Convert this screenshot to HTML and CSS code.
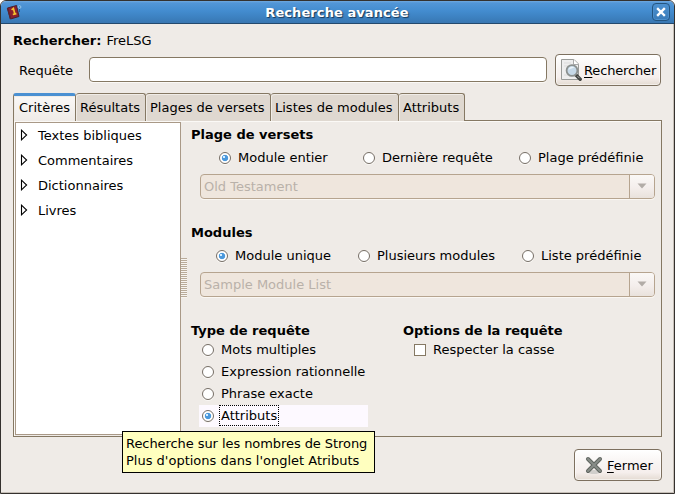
FILE: index.html
```html
<!DOCTYPE html>
<html lang="fr">
<head>
<meta charset="utf-8">
<title>Recherche avancée</title>
<link rel="stylesheet" href="styles.css">
</head>
<body>
<div class="window">
  <header class="titlebar">
    <svg class="app-icon" width="16" height="16" viewBox="0 0 16 16"><path d="M1.5 4 10.5 1.5 13 12.5 4.5 15Z" fill="#8a1f2f" stroke="#4b202c"/><path d="M1.5 4 4.5 15" stroke="#5c2430" stroke-width="1.4"/><path d="M5.6 5.8 7.4 4.4 8.8 9.8M6.8 10.5 10.4 9.6" fill="none" stroke="#f5c22e" stroke-width="1.7"/><circle cx="13.5" cy="3" r="1.4" fill="#4d91cc" stroke="#92c4e9"/><path d="M13.5 5v3" stroke="#245b91"/></svg>
    <h1>Recherche avancée</h1>
    <button class="close" aria-label="Fermer la fenêtre"><svg width="10" height="10" viewBox="0 0 10 10"><path d="M2 2 8 8M8 2 2 8" stroke="#fff" stroke-width="2.4" stroke-linecap="square"/></svg></button>
  </header>
  <main>
    <p class="scope"><b>Rechercher:</b><span>FreLSG</span></p>
    <div class="query">
      <label for="q">Requête</label>
      <input id="q" type="text">
      <button class="button search"><svg width="22" height="24" viewBox="0 0 22 24"><path d="M1.5 1.5H14L18.5 6V21.5H1.5Z" fill="#eee" stroke="#999b98"/><path d="M13.5 1.5V6.5H18.5" fill="#fff" stroke="#aaa"/><path d="M4 5h7M4 8h4M4 17h4" stroke="#dcdcdc"/><path d="m16 17 4.2 4.2" stroke="#424542" stroke-width="3.4" stroke-linecap="round"/><path d="m17.5 18.2 2 2" stroke="#aaa"/><circle cx="12" cy="12.5" r="5.4" fill="#c6d9e8" stroke="#8b908f" stroke-width="1.8"/><path d="M8.5 12c1-3.5 4-4 6-2-2 0-4 .5-6 2Z" fill="#edf5fa"/></svg><span><u>R</u>echercher</span></button>
    </div>
    <nav class="tabs">
      <div class="tab active">Critères</div><div class="tab t2">Résultats</div><div class="tab t3">Plages de versets</div><div class="tab t4">Listes de modules</div><div class="tab t5">Attributs</div>
    </nav>
    <section class="panel">
      <ul class="tree">
        <li><svg width="8" height="12" viewBox="0 0 8 12"><path d="M1.5 1.2V10.8L6.6 6Z"/></svg>Textes bibliques</li>
        <li><svg width="8" height="12" viewBox="0 0 8 12"><path d="M1.5 1.2V10.8L6.6 6Z"/></svg>Commentaires</li>
        <li><svg width="8" height="12" viewBox="0 0 8 12"><path d="M1.5 1.2V10.8L6.6 6Z"/></svg>Dictionnaires</li>
        <li><svg width="8" height="12" viewBox="0 0 8 12"><path d="M1.5 1.2V10.8L6.6 6Z"/></svg>Livres</li>
      </ul>
      <div class="grip"></div>
      <div class="settings">
        <section class="group">
          <h2>Plage de versets</h2>
          <div class="choices verses"><label><i class="radio on"></i>Module entier</label><label><i class="radio"></i>Dernière requête</label><label><i class="radio"></i>Plage prédéfinie</label></div>
          <div class="combo"><span>Old Testament</span><i class="drop"><svg width="10" height="6" viewBox="0 0 10 6"><path d="M.5.5H9.5L5 5.5Z"/></svg></i></div>
        </section>
        <section class="group">
          <h2>Modules</h2>
          <div class="choices modules"><label><i class="radio on"></i>Module unique</label><label><i class="radio"></i>Plusieurs modules</label><label><i class="radio"></i>Liste prédéfinie</label></div>
          <div class="combo"><span>Sample Module List</span><i class="drop"><svg width="10" height="6" viewBox="0 0 10 6"><path d="M.5.5H9.5L5 5.5Z"/></svg></i></div>
        </section>
        <div class="bottom">
          <section class="types">
            <h2>Type de requête</h2>
            <label class="option"><i class="radio"></i>Mots multiples</label>
            <label class="option"><i class="radio"></i>Expression rationnelle</label>
            <label class="option"><i class="radio"></i>Phrase exacte</label>
            <label class="option hover"><i class="radio on"></i><span class="focus">Attributs</span></label>
          </section>
          <section class="options">
            <h2>Options de la requête</h2>
            <label class="option"><i class="check"></i>Respecter la casse</label>
          </section>
        </div>
      </div>
    </section>
    <footer><button class="button fermer"><svg width="18" height="19" viewBox="0 0 18 19"><ellipse cx="9" cy="16" rx="6" ry="2" fill="#d0cecb"/><path d="M3 3 15 15M15 3 3 15" stroke="#5f645f" stroke-width="4" stroke-linecap="round"/><path d="M3 3 15 15M15 3 3 15" stroke="#888d88" stroke-width="2" stroke-linecap="round"/></svg><span><u>F</u>ermer</span></button></footer>
  </main>
  <div class="tooltip"><span class="tight">Recherche sur les nombres de Strong</span><br>Plus d'options dans l'onglet Atributs</div>
</div>
</body>
</html>
```
FILE: styles.css
```css
* { box-sizing: border-box; }
body { margin: 0; background: #fff; color: #000; font: 13px/17px "DejaVu Sans", sans-serif; }
h1, h2, p, ul { margin: 0; padding: 0; }
h1, h2 { font-size: 13px; line-height: 17px; }
button, input { font: inherit; color: inherit; }
i { font-style: normal; flex: none; }
svg { display: block; flex: none; }
label, span, b, .tab, li, h1, h2 { white-space: nowrap; }

.window { position: relative; width: 675px; height: 494px; border: 1px solid #34312e; border-radius: 6px 6px 0 0; background: #efebe7; overflow: hidden; box-shadow: inset -1px -1px #c6bfb7; }
.titlebar { display: flex; align-items: center; height: 23px; padding: 0 4px 0 5px; border-bottom: 1px solid #24496d; background: linear-gradient(#6fa9df 0, #5296d7 2px, #438ccf 10px, #3c80bf 17px, #3977b2); }
.titlebar h1 { flex: 1; text-align: center; color: #fff; text-shadow: 1px 1px 1px #173655; letter-spacing: .08px; }
.close { display: grid; place-items: center; width: 18px; height: 18px; padding: 0; border: 1px solid #245580; border-radius: 4px; background: linear-gradient(#4c91d1, #397bb8); box-shadow: inset 0 0 0 1px #4c8fcd; }

main { padding: 8px 12px 0; }
.scope { display: flex; gap: 5px; height: 17px; }
.query { display: grid; grid-template-columns: 76px 458px 114px; align-items: center; height: 32px; margin-top: 5px; }
.query label { padding-left: 6px; }
.query input { align-self: start; width: 458px; height: 25px; margin-top: 3px; padding: 3px 5px; border: 1px solid #857863; border-radius: 4px; background: #fff; box-shadow: 0 1px #fbf9f6; outline: none; }
.button { display: flex; align-items: center; height: 32px; padding: 0 4px; border: 1px solid #7d705f; border-radius: 4px; background: linear-gradient(#fff, #f7f3f1 48%, #f6efed 74%, #e4dbd2); box-shadow: inset 0 0 0 1px #fff8; }
.search { width: 106px; margin-left: 8px; gap: 2px; letter-spacing: -.15px; }
u { text-decoration-thickness: 1px; text-underline-offset: 2px; }

.tabs { display: flex; height: 28px; margin-top: 7px; }
.tab { position: relative; height: 28px; padding: 5px 4px; border: 1px solid #857863; border-left-width: 0; border-bottom: 0; border-radius: 3px 3px 0 0; background: #dfd8d0; box-shadow: inset 1px 1px #f0ece7; }
.active { z-index: 1; width: 63px; padding-left: 5px; border-left-width: 1px; border-top: 3px solid #4a90d2; padding-top: 3px; background: linear-gradient(#faf8f6, #efebe7); }
.t2 { width: 70px; }
.t3 { width: 125px; }
.t4 { width: 128px; }
.t5 { width: 66px; }
.panel { display: flex; width: 649px; height: 317px; margin-top: -1px; padding: 1px; border: 1px solid #857863; box-shadow: inset 1px 1px #fbf9f6; }
.tree { flex: none; width: 166px; height: 313px; list-style: none; border: 1px solid #a99987; background: #fff; }
.tree li { display: flex; align-items: center; height: 25px; padding-left: 4px; gap: 10px; }
.tree svg { margin-top: -1px; }
.tree path { fill: #fff; stroke: #000; stroke-width: 1.1; }
.grip { flex: none; width: 6px; height: 40px; margin-top: 136px; background: repeating-linear-gradient(#b8aa99 0 1px, #f7f4f0 1px 2px); }
.settings { flex: none; padding: 4px 0 0 4px; width: 469px; }
.group { height: 98px; }
.choices { display: grid; height: 22px; margin-top: 4px; align-items: center; }
.verses { grid-template-columns: 144px 156px auto; padding-left: 28px; }
.modules { grid-template-columns: 142px 164px auto; padding-left: 25px; }
.choices label, .option { display: flex; align-items: center; gap: 7px; height: 22px; padding-bottom: 2px; }
.radio { width: 12px; height: 12px; margin-top: 2px; border: 1px solid #756d65; border-radius: 50%; background: #fff; box-shadow: 0 1px #faf8f5; }
.on { background: radial-gradient(circle at 4px 4px, #d5edff 0 .8px, transparent 1.5px), radial-gradient(circle at center, #4b98dc 0 2.8px, #fff 3.6px); }
.combo { display: flex; width: 455px; height: 25px; margin: 5px 0 0 9px; border: 1px solid #b6a48f; border-radius: 4px; background: #efe6dd; color: #b9b1a9; box-shadow: 0 1px #faf7f3; overflow: hidden; }
.combo span { flex: 1; padding: 3px 0 0 3px; }
.drop { display: grid; place-items: center; width: 25px; padding-bottom: 1px; border-left: 1px solid #b6a48f; background: linear-gradient(#faf8f6, #f4eeec 55%, #e9e2dc); }
.drop path { fill: #b2aca7; }
.bottom { display: grid; grid-template-columns: 212px 1fr; }
.option { margin-left: 8px; width: 169px; padding-left: 3px; }
.hover { background: #fdf9ff; }
.focus { height: 21px; margin: 0 0 -1px -2px; padding: 1px; border: 1px dotted #000; }
.options .option { margin-left: 0; padding-left: 11px; }
.check { width: 12px; height: 12px; margin-top: 2px; border: 1px solid #857863; background: #fff; }
footer { display: flex; justify-content: flex-end; margin-top: 12px; padding-right: 0; }
.fermer { width: 88px; padding-left: 10px; gap: 4px; }
.tooltip { position: absolute; left: 121px; top: 430px; width: 253px; height: 42px; padding: 3px; border: 1px solid #000; background: #ffffbf; white-space: nowrap; }
.tight { letter-spacing: -.07px; }
```
